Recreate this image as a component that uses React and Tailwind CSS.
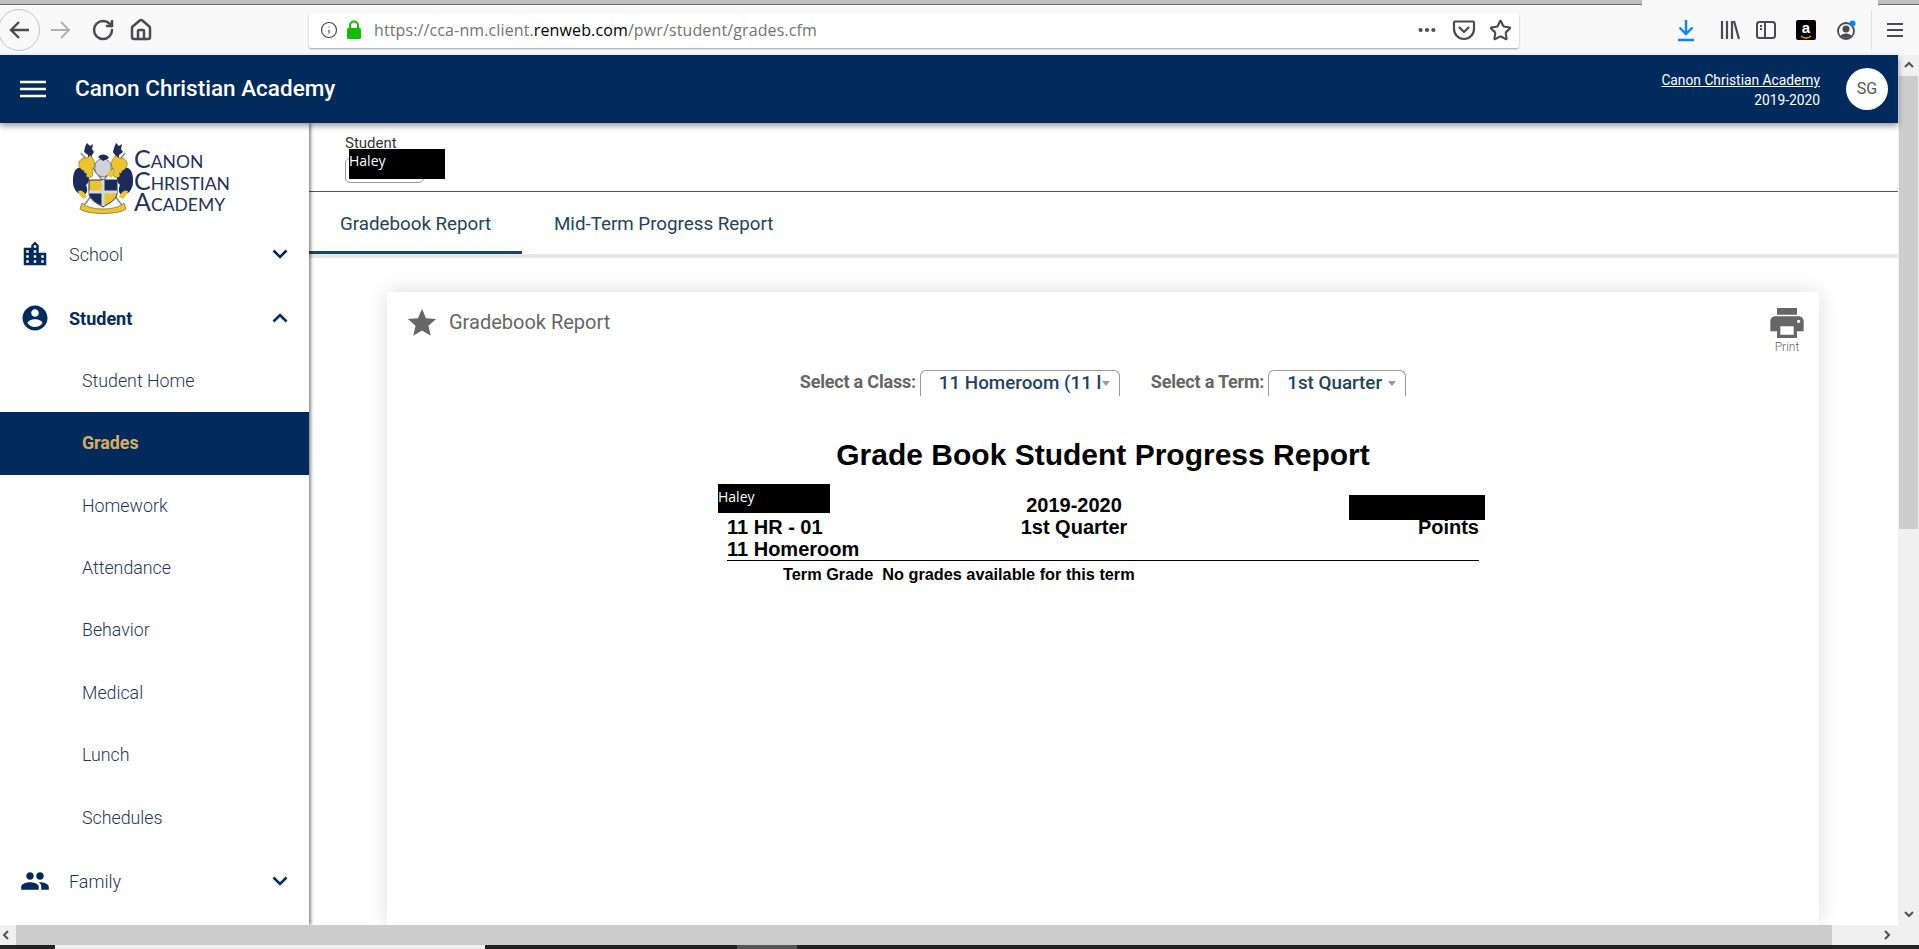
import React from 'react';
import { RotateCw, House, Info, Ellipsis, Star } from 'lucide-react';

const NAVY = '#002b5c';

const MaterialIcon = ({ d, size = 30, className = '' }) => (
    <svg width={size} height={size} viewBox="0 0 24 24" className={className} fill="currentColor">
        <path d={d} />
    </svg>
);

const ICON_CITY = 'M15 11V5l-3-3-3 3v2H3v14h18V11h-6zm-8 8H5v-2h2v2zm0-4H5v-2h2v2zm0-4H5V9h2v2zm6 8h-2v-2h2v2zm0-4h-2v-2h2v2zm0-4h-2V9h2v2zm0-4h-2V5h2v2zm6 12h-2v-2h2v2zm0-4h-2v-2h2v2z';
const ICON_ACCOUNT = 'M12 2C6.48 2 2 6.48 2 12s4.48 10 10 10 10-4.48 10-10S17.52 2 12 2zm0 3c1.66 0 3 1.34 3 3s-1.34 3-3 3-3-1.34-3-3 1.34-3 3-3zm0 14.2c-2.5 0-4.71-1.28-6-3.22.03-1.99 4-3.08 6-3.08 1.99 0 5.97 1.09 6 3.08-1.29 1.94-3.5 3.22-6 3.22z';
const ICON_PEOPLE = 'M16 11c1.66 0 2.99-1.34 2.99-3S17.66 5 16 5c-1.66 0-3 1.34-3 3s1.34 3 3 3zm-8 0c1.66 0 2.99-1.34 2.99-3S9.66 5 8 5C6.34 5 5 6.34 5 8s1.34 3 3 3zm0 2c-2.33 0-7 1.17-7 3.5V19h14v-2.5c0-2.33-4.67-3.5-7-3.5zm8 0c-.29 0-.62.02-.97.05 1.16.84 1.97 1.97 1.97 3.45V19h6v-2.5c0-2.33-4.67-3.5-7-3.5z';
const ICON_PRINT = 'M19 8H5c-1.66 0-3 1.34-3 3v6h4v4h12v-4h4v-6c0-1.66-1.34-3-3-3zm-3 11H8v-5h8v5zm3-7c-.55 0-1-.45-1-1s.45-1 1-1 1 .45 1 1-.45 1-1 1zm-1-9H6v4h12V3z';
const ICON_STAR = 'M12 17.27L18.18 21l-1.64-7.03L22 9.24l-7.19-.61L12 2 9.19 8.63 2 9.24l5.46 4.73L5.82 21z';

const Chevron = ({ up }) => (
    <svg width="16" height="10" viewBox="0 0 16 10" fill="none" stroke={NAVY} strokeWidth="2.6">
        <path d={up ? 'M1.5 8.5 L8 2 L14.5 8.5' : 'M1.5 1.5 L8 8 L14.5 1.5'} />
    </svg>
);

const Crest = () => (
    <svg width="60" height="72" viewBox="0 0 60 72" className="shrink-0">
        {/* swords */}
        <path d="M8 10 L52 66 M52 10 L8 66" stroke="#8a8d92" strokeWidth="1.6" />
        {/* crest finials */}
        <path d="M14 0 l3 3 l3 -2 l-1 5 l2 3 l-2 3 l-1 8 l-3 0 l0 -8 l-4 -3 l1 -5z M43 0 l3 3 l3 -2 l-1 5 l2 3 l-4 3 l0 8 l-3 0 l-1 -8 l-2 -3 l1 -4z" fill="#1d2a5c" />
        {/* mantling */}
        <path d="M1 30 C-2 40 1 50 9 52 C15 52 15 46 13 42 C18 38 16 30 12 30 C9 22 3 24 1 30z" fill="#1d2a5c" />
        <path d="M59 30 C62 40 59 50 51 52 C45 52 45 46 47 42 C42 38 44 30 48 30 C51 22 57 24 59 30z" fill="#1d2a5c" />
        <path d="M6 19 C9 13 15 17 17 12 C21 16 24 22 19 27 C22 33 17 37 13 33 C15 28 11 28 9 27 C7 25 5 23 6 19z" fill="#edc32e" stroke="#5d4e17" strokeWidth=".5" />
        <path d="M54 19 C51 13 45 17 43 12 C39 16 36 22 41 27 C38 33 43 37 47 33 C45 28 49 28 51 27 C53 25 55 23 54 19z" fill="#edc32e" stroke="#5d4e17" strokeWidth=".5" />
        <path d="M5 48 C9 46 12 50 14 54 L10 56 C8 53 6 52 5 48z M55 48 C51 46 48 50 46 54 L50 56 C52 53 54 52 55 48z" fill="#edc32e" />
        {/* helmet */}
        <path d="M22 23 C22 14 37 13 38 23 C39 29 36 33 30 34 C25 33 21 30 22 23z" fill="#cfd2d6" stroke="#4b4f55" strokeWidth=".7" />
        <path d="M25 14 C28 10 34 11 36 15 L30 18z" fill="#1d2a5c" />
        <path d="M37 27 C41 27 42 32 38 35 L34 32z" fill="#edc32e" />
        {/* shield */}
        <path d="M16 37 H44 V50 C44 57 36 60 30 64 C24 60 16 57 16 50z" fill="#edc32e" stroke="#1d2a5c" strokeWidth="1" />
        <path d="M30 37 H44 V49 H30z M30 49 V63 C26 61 18 58 16 50 V49z" fill="#1d2a5c" />
        <path d="M28.5 37 H31.5 V63 H28.5z M16 47.5 H44 V50.5 H16z" fill="#d5d7da" />
        {/* motto banner */}
        <path d="M9 60 C16 68 44 68 51 60 L53 66 C46 72 14 72 7 66z" fill="#edc32e" stroke="#5d4e17" strokeWidth=".6" />
    </svg>
);

const SchoolLogo = () => (
    <div className="h-[99px] flex pl-[73px] pt-[20px] shrink-0">
        <Crest />
        <div className="ml-[1px] mt-[5px] text-[#232f5e] font-['Lato',sans-serif] uppercase text-[17.5px] leading-[21.5px]">
            <div className="h-[21.5px] first-letter:text-[25px]">Canon</div>
            <div className="h-[21.5px] first-letter:text-[25px]">Christian</div>
            <div className="h-[21.5px] first-letter:text-[25px]">Academy</div>
        </div>
    </div>
);

const NavItem = ({ icon, label, open, bold }) => (
    <div className="h-[64px] flex items-center pl-[20px] pr-[21px] shrink-0">
        <MaterialIcon d={icon} className="text-[#002b5c]" />
        <span className={`ml-[19px] text-[18px] flex-1 ${bold ? 'font-bold text-[#002b5c]' : 'font-light text-[#1f3559]'}`}>{label}</span>
        <Chevron up={open} />
    </div>
);

const SubItem = ({ label, active }) => (
    <div className={`h-[62.4px] flex items-center pl-[82px] text-[17.8px] shrink-0 ${active ? 'bg-[#002b5c] text-[#d9ae5f] font-bold' : 'font-light text-[#1f3559]'}`}>
        {label}
    </div>
);

const Sidebar = () => (
    <div className="w-[309px] shrink-0 bg-white shadow-[2px_0_3px_rgba(0,0,0,0.45)] z-[5] flex flex-col overflow-hidden">
        <SchoolLogo />
        <NavItem icon={ICON_CITY} label="School" />
        <NavItem icon={ICON_ACCOUNT} label="Student" open bold />
        <SubItem label="Student Home" />
        <SubItem label="Grades" active />
        <SubItem label="Homework" />
        <SubItem label="Attendance" />
        <SubItem label="Behavior" />
        <SubItem label="Medical" />
        <SubItem label="Lunch" />
        <SubItem label="Schedules" />
        <NavItem icon={ICON_PEOPLE} label="Family" />
    </div>
);

const BrowserToolbar = () => (
    <div className="h-[50px] bg-[#f9f9fa] flex items-center text-[#4a4a4f] shrink-0">
        <div className="w-[42px] h-[42px] -ml-[2px] rounded-full border border-[#c4c4c6] flex items-center justify-center shrink-0">
            <svg width="22" height="22" viewBox="0 0 22 22" fill="none" stroke="currentColor" strokeWidth="2.4">
                <path d="M21 11H3 M11 3 L3 11 L11 19" />
            </svg>
        </div>
        <svg width="22" height="22" viewBox="0 0 22 22" className="ml-[10px] text-[#b1b1b3] shrink-0" fill="none" stroke="currentColor" strokeWidth="2">
            <path d="M1 11H19 M11 3 L19 11 L11 19" />
        </svg>
        <RotateCw size={24} strokeWidth={2.5} className="ml-[19px] shrink-0" />
        <House size={24} strokeWidth={2.5} className="ml-[14px] shrink-0" />
        <div className="ml-[156px] w-[1210px] h-[35px] bg-white rounded-[2px] shadow-[0_1px_2px_rgba(0,0,0,0.35)] flex items-center shrink-0">
            <Info size={18} strokeWidth={1.6} className="ml-[11px]" />
            <svg width="16" height="20" viewBox="0 0 16 20" className="ml-[8px]">
                <path d="M4 8V5.5a4 4 0 0 1 8 0V8" fill="none" stroke="#12bc00" strokeWidth="2" />
                <rect x="1" y="8" width="14" height="11" rx="1.5" fill="#12bc00" />
            </svg>
            <div className="ml-[12px] flex-1 text-[16px] text-[#737373] font-['Open_Sans',sans-serif] tracking-[0.12px] whitespace-nowrap">
                https://cca-nm.client.<span className="text-black">renweb.com</span>/pwr/student/grades.cfm
            </div>
            <Ellipsis size={22} strokeWidth={2.6} />
            <svg width="24" height="22" viewBox="0 0 24 22" className="ml-[14px]" fill="none" stroke="currentColor" strokeWidth="2.2">
                <path d="M3 2.5H21a1 1 0 0 1 1 1V10a10 10 0 0 1-20 0V3.5a1 1 0 0 1 1-1z" />
                <path d="M7.5 8.5 L12 13 L16.500 8.5" strokeLinecap="round" />
            </svg>
            <Star size={23} strokeWidth={2.2} className="ml-[13px] mr-[7px]" />
        </div>
        <div className="ml-[158px] flex items-center">
            <svg width="18" height="24" viewBox="0 0 18 24" fill="none" stroke="#0a84ff" strokeWidth="2.4">
                <path d="M9 2V16 M2.500 9.500 L9 16 L15.500 9.500 M1 22H17" />
            </svg>
            <svg width="20" height="20" viewBox="0 0 20 20" className="ml-[25px]" fill="none" stroke="currentColor" strokeWidth="2.2">
                <path d="M2 1V19 M7 1V19 M12 1V19 M14 1L19 19" />
            </svg>
            <svg width="20" height="20" viewBox="0 0 20 20" className="ml-[16px]" fill="none" stroke="currentColor" strokeWidth="2">
                <rect x="1" y="2" width="18" height="16" rx="2.500" />
                <path d="M9 2V18 M4 6H6 M4 9H6" />
            </svg>
            <div className="relative ml-[20px] w-[20px] h-[20px] bg-black rounded-[2px] text-white text-[15px] font-bold leading-[15px] text-center font-['Liberation_Sans',sans-serif]">
                a
                <svg width="12" height="4" viewBox="0 0 12 4" className="absolute left-[4px] bottom-[1px]" fill="none" stroke="#f90" strokeWidth="1.4">
                    <path d="M1 1 C4 3.500 8 3.500 11 1" />
                </svg>
            </div>
            <svg width="19" height="20" viewBox="0 0 19 20" className="ml-[21px]" fill="none" stroke="currentColor">
                <circle cx="9" cy="11" r="8" strokeWidth="1.8" />
                <circle cx="9" cy="9" r="3.500" fill="currentColor" stroke="none" />
                <path d="M3.500 16 C5 12.500 13 12.500 14.500 16 C12 18.500 6 18.500 3.500 16z" fill="currentColor" stroke="none" />
                <circle cx="15.500" cy="3.500" r="3" fill="#0a84ff" stroke="none" />
            </svg>
            <div className="ml-[15px] w-px h-[40px] bg-[#e0e0e2]" />
            <svg width="16" height="16" viewBox="0 0 16 16" className="ml-[15px]" fill="none" stroke="currentColor" strokeWidth="2">
                <path d="M0 2H16 M0 8H16 M0 14H16" />
            </svg>
        </div>
    </div>
);

const AppHeader = () => (
    <div className="h-[68px] bg-[#002b5c] flex items-center text-white shadow-[0_3px_6px_rgba(0,0,0,0.4)] z-10 shrink-0">
        <svg width="26" height="18" viewBox="0 0 26 18" className="ml-[20px]" stroke="white" strokeWidth="2.4">
            <path d="M0 2H26 M0 9H26 M0 16H26" />
        </svg>
        <div className="ml-[29px] text-[22.5px] font-medium flex-1">Canon Christian Academy</div>
        <div className="text-right text-[13.8px] leading-[20px] mt-[2px]">
            <div className="underline">Canon Christian Academy</div>
            <div>2019-2020</div>
        </div>
        <div className="ml-[26px] mr-[10px] w-[42px] h-[42px] rounded-full bg-white text-[#555] text-[16px] flex items-center justify-center">SG</div>
    </div>
);

const StudentPicker = () => (
    <div className="relative h-[69px] border-b border-[#555] pl-[36px] pt-[13px] shrink-0">
        <div className="text-[15px] leading-[14px] text-[#333]">Student</div>
        <div className="w-[79px] h-[25px] mt-[8px] rounded-[5px] border border-[#999]" />
        <div className="absolute left-[40px] top-[26px] w-[96px] h-[30px] bg-black text-white text-[14px] leading-[23px] font-['Open_Sans',sans-serif]">Haley</div>
    </div>
);

const Tabs = () => (
    <div className="shrink-0 border-b-[4px] border-[#e6e6e6]">
        <div className="flex h-[62px] text-[18.75px] text-[#1d4460]">
            <div className="w-[213px] pl-[31px] pt-[18px] border-b-[3px] border-[#1d4460]">Gradebook Report</div>
            <div className="ml-[32px] pt-[18px]">Mid-Term Progress Report</div>
        </div>
    </div>
);

const ClassSelect = ({ label, value, boxWidth }) => (
    <div className="flex items-center">
        <span className="text-[18px] font-bold text-[#666] tracking-[-0.2px] whitespace-nowrap -mt-[3px]">{label}</span>
        <div className={`ml-[4px] h-[26px] rounded-t-[6px] border border-b-0 border-[#999] flex items-center pl-[18px] ${boxWidth}`}>
            <span className="text-[18.8px] font-medium text-[#1d4460] whitespace-nowrap">{value}</span>
            <span className="ml-auto mr-[9px] w-0 h-0 border-x-[4px] border-x-transparent border-t-[5px] border-t-[#999]" />
        </div>
    </div>
);

const ProgressReport = () => (
    <div className="relative mx-[340px] font-['Liberation_Sans',Arial,sans-serif] font-bold text-black">
        <div className="text-center text-[30px] leading-[36px]">Grade Book Student Progress Report</div>
        <div className="grid grid-cols-[240px_214px_1fr] text-[20px] leading-[22px] mt-[21px]">
            <div />
            <div className="text-center">2019-2020</div>
            <div />
            <div>11 HR - 01</div>
            <div className="text-center">1st Quarter</div>
            <div className="text-right">Points</div>
            <div>11 Homeroom</div>
        </div>
        <div className="border-t border-black pl-[56px] pt-[5px] text-[16.3px] leading-[17px] whitespace-pre">Term Grade  No grades available for this term</div>
        {/* redacted bits */}
        <div className="absolute left-[-9px] top-[47px] w-[112px] h-[29px] bg-black text-white font-normal font-['Open_Sans',sans-serif] text-[14px] leading-[26px]">Haley</div>
        <div className="absolute right-[-6px] top-[58px] w-[136px] h-[25px] bg-black" />
    </div>
);

const GradebookCard = () => (
    <div className="flex-1 mt-[34px] ml-[78px] mr-[79px] bg-white shadow-[0_0_20px_rgba(0,0,0,0.14)]">
        <div className="flex h-[64px] pl-[18px] pr-[12px] text-[#666]">
            <MaterialIcon d={ICON_STAR} size={34} className="mt-[14px]" />
            <span className="ml-[10px] mt-[17px] text-[20px] leading-[26px] flex-1">Gradebook Report</span>
            <div className="flex flex-col items-center mt-[11px]">
                <MaterialIcon d={ICON_PRINT} size={40} />
                <span className="text-[12px] leading-[14px] font-light -mt-[3px]">Print</span>
            </div>
        </div>
        <div className="flex justify-center gap-[31px] mt-[14px]">
            <ClassSelect label="Select a Class:" value="11 Homeroom (11 l" boxWidth="w-[200px]" />
            <ClassSelect label="Select a Term:" value="1st Quarter" boxWidth="w-[138px]" />
        </div>
        <div className="mt-[41px]">
            <ProgressReport />
        </div>
    </div>
);

const VScrollbar = () => (
    <div className="w-[21px] shrink-0 bg-[#f0f0f0] flex flex-col items-center text-[#505050]">
        <svg width="10" height="7" viewBox="0 0 10 7" className="mt-[6px] mb-[8px] shrink-0" fill="none" stroke="currentColor" strokeWidth="2">
            <path d="M1 6 L5 2 L9 6" />
        </svg>
        <div className="w-[19px] h-[453px] bg-[#cdcdcd] shrink-0" />
        <div className="flex-1" />
        <svg width="10" height="7" viewBox="0 0 10 7" className="mb-[27px] shrink-0" fill="none" stroke="currentColor" strokeWidth="2">
            <path d="M1 1 L5 5 L9 1" />
        </svg>
    </div>
);

const HScrollbar = () => (
    <div className="h-[20px] bg-[#f0f0f0] flex items-center text-[#505050] shrink-0 z-20">
        <svg width="7" height="10" viewBox="0 0 7 10" className="ml-[2px] shrink-0" fill="none" stroke="currentColor" strokeWidth="2">
            <path d="M6 1 L2 5 L6 9" />
        </svg>
        <div className="ml-[7px] w-[1816px] h-full bg-[#cdcdcd] shrink-0" />
        <svg width="7" height="10" viewBox="0 0 7 10" className="ml-[52px] shrink-0" fill="none" stroke="currentColor" strokeWidth="2">
            <path d="M1 1 L5 5 L1 9" />
        </svg>
    </div>
);

export default function App() {
    return (
        <div className="w-[1919px] h-[949px] overflow-hidden flex flex-col bg-white font-['Roboto',sans-serif]">
            {/* sliver of the browser tab strip */}
            <div className="h-[5px] flex shrink-0">
                <div className="w-[1642px] bg-[#bfbfbf] border-b border-[#707070]" />
                <div className="w-[236px] bg-[#f9f9fa]" />
                <div className="flex-1 bg-[#bfbfbf] border-b border-[#707070]" />
            </div>
            <BrowserToolbar />
            <div className="flex-1 flex min-h-0">
                <div className="flex-1 flex flex-col min-w-0">
                    <AppHeader />
                    <div className="flex-1 flex min-h-0">
                        <Sidebar />
                        <div className="flex-1 flex flex-col min-w-0 overflow-hidden">
                            <StudentPicker />
                            <Tabs />
                            <GradebookCard />
                        </div>
                    </div>
                    <HScrollbar />
                </div>
                <VScrollbar />
            </div>
            {/* sliver of the desktop taskbar */}
            <div className="h-[4px] flex shrink-0 bg-[#222]">
                <div className="w-[55px]" />
                <div className="w-[430px] bg-[#f0f0f0]" />
                <div className="w-[252px]" />
                <div className="w-[60px] bg-[#555]" />
            </div>
        </div>
    );
}
